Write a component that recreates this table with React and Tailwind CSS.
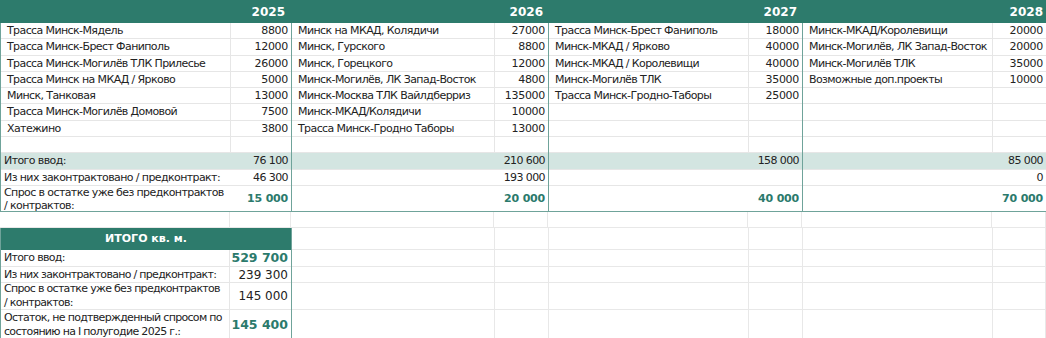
import React from 'react';

const sections = [
    {
        year: '2025',
        width: 'w-[292px] border-l',
        nameW: 'w-[230px]',
        numW: 'w-[60px]',
        rows: [
            ['Трасса Минск-Мядель', '8800'],
            ['Трасса Минск-Брест Фаниполь', '12000'],
            ['Трасса Минск-Могилёв ТЛК Прилесье', '26000'],
            ['Трасса Минск на МКАД / Ярково', '5000'],
            ['Минск, Танковая', '13000'],
            ['Трасса Минск-Могилёв Домовой', '7500'],
            ['Хатежино', '3800'],
        ],
        total: '76 100',
        contracted: '46 300',
        rest: '15 000',
    },
    {
        year: '2026',
        width: 'w-[257px]',
        nameW: 'w-[203px]',
        numW: 'w-[53px]',
        rows: [
            ['Минск на МКАД, Колядичи', '27000'],
            ['Минск, Гурского', '8800'],
            ['Минск, Горецкого', '12000'],
            ['Минск-Могилёв, ЛК Запад-Восток', '4800'],
            ['Минск-Москва ТЛК Вайлдберриз', '135000'],
            ['Минск-МКАД/Колядичи', '10000'],
            ['Трасса Минск-Гродно Таборы', '13000'],
        ],
        total: '210 600',
        contracted: '193 000',
        rest: '20 000',
    },
    {
        year: '2027',
        width: 'w-[254px]',
        nameW: 'w-[200px]',
        numW: 'w-[53px]',
        rows: [
            ['Трасса Минск-Брест Фаниполь', '18000'],
            ['Минск-МКАД / Ярково', '40000'],
            ['Минск-МКАД / Королевищи', '40000'],
            ['Минск-Могилёв ТЛК', '35000'],
            ['Трасса Минск-Гродно-Таборы', '25000'],
        ],
        total: '158 000',
        contracted: '',
        rest: '40 000',
    },
    {
        year: '2028',
        width: 'flex-1 border-r-0',
        nameW: 'w-[190px]',
        numW: 'flex-1',
        rows: [
            ['Минск-МКАД/Королевищи', '20000'],
            ['Минск-Могилёв, ЛК Запад-Восток', '20000'],
            ['Минск-Могилёв ТЛК', '35000'],
            ['Возможные доп.проекты', '10000'],
        ],
        total: '85 000',
        contracted: '0',
        rest: '70 000',
    },
];

const gridCols = ['w-[230px]', 'w-[61px]', 'w-[203px]', 'w-[54px]', 'w-[200px]', 'w-[54px]', 'w-[190px]', 'flex-1'];

const Section = ({ s, first }) => (
    <div className={`${s.width} flex flex-col border-r border-[#6fa39a]`}>
        {Array.from({ length: 8 }).map((_, i) => {
            const r = s.rows[i] || ['', ''];
            return (
                <div key={i} className="h-[16.3px] flex border-b border-[#e6e6e6]">
                    <div className={`${s.nameW} border-r border-[#e6e6e6] pl-[6px] leading-[16px] whitespace-nowrap overflow-hidden`}>{r[0]}</div>
                    <div className={`${s.numW} pr-[3px] text-right leading-[16px] tracking-[-0.3px]`}>{r[1]}</div>
                </div>
            );
        })}
        <div className="h-[17px] bg-[#d3e5e1] flex justify-between items-center px-[3px] border-b border-[#e6e6e6]">
            <span>{first ? 'Итого ввод:' : ''}</span>
            <span>{s.total}</span>
        </div>
        <div className="h-[16px] flex justify-between items-center px-[3px] border-b border-[#e6e6e6]">
            <span>{first ? 'Из них законтрактовано / предконтракт:' : ''}</span>
            <span>{s.contracted}</span>
        </div>
        <div className="h-[25px] flex justify-between items-center px-[3px]">
            <span className="leading-[13px]">{first ? <>Спрос в остатке уже без предконтрактов<br />/ контрактов:</> : ''}</span>
            <span className="font-bold text-[#2b7a6c] tracking-[-0.2px]">{s.rest}</span>
        </div>
    </div>
);

const GridRow = ({ h, skip = 0 }) => (
    <div className={`${h} flex border-b border-[#e8e8e8]`}>
        {gridCols.slice(skip).map((c, i) => (
            <div key={i} className={`${c} border-r border-[#e8e8e8]`} />
        ))}
    </div>
);

const totals = [
    { label: 'Итого ввод:', value: '529 700', accent: true, h: 'h-[17px]' },
    { label: 'Из них законтрактовано / предконтракт:', value: '239 300', h: 'h-[16px]' },
    { label: <>Спрос в остатке уже без предконтрактов<br />/ контрактов:</>, value: '145 000', h: 'h-[27px]' },
    { label: <>Остаток, не подтвержденный спросом по<br />состоянию на I полугодие 2025 г.:</>, value: '145 400', accent: true, h: 'h-[30px]' },
];

export default function App() {
    return (
        <div className="w-[1046px] h-[338px] overflow-hidden bg-white text-[#222] text-[11px] tracking-[-0.6px]" style={{ fontFamily: '"DejaVu Sans", Verdana, sans-serif' }}>
            {/* header */}
            <div className="h-[23px] bg-[#2d7b6c] flex text-white font-bold text-[12px] tracking-normal items-center">
                <div className="w-[291px] text-right pr-[6px]">2025</div>
                <div className="w-[257px] text-right pr-[5px]">2026</div>
                <div className="w-[254px] text-right pr-[5px]">2027</div>
                <div className="flex-1 text-right pr-[3px]">2028</div>
            </div>
            <div className="flex border-b border-[#6fa39a]">
                {sections.map((s, i) => (
                    <Section key={s.year} s={s} first={i === 0} />
                ))}
            </div>
            <GridRow h="h-[16px]" />
            <div className="flex">
                <div className="w-[292px] flex flex-col border-x border-[#6fa39a]">
                    <div className="h-[22px] bg-[#2d7b6c] text-white font-bold text-[11px] tracking-normal flex items-center justify-center">ИТОГО кв. м.</div>
                    {totals.map((t, i) => (
                        <div key={i} className={`${t.h} flex border-b border-[#e6e6e6]`}>
                            <div className="w-[229px] border-r border-[#e6e6e6] pl-[3px] flex items-center leading-[14px] whitespace-nowrap tracking-[-0.7px]">{t.label}</div>
                            <div className={`flex-1 flex items-center justify-end pr-[3px] tracking-normal ${t.accent ? 'font-bold text-[#2b7a6c] text-[12.5px]' : 'text-[12px]'}`}>{t.value}</div>
                        </div>
                    ))}
                </div>
                <div className="flex-1 flex flex-col">
                    <GridRow h="h-[22px]" skip={2} />
                    <GridRow h="h-[17px]" skip={2} />
                    <GridRow h="h-[16px]" skip={2} />
                    <GridRow h="h-[27px]" skip={2} />
                    <GridRow h="h-[30px]" skip={2} />
                </div>
            </div>
        </div>
    );
}
